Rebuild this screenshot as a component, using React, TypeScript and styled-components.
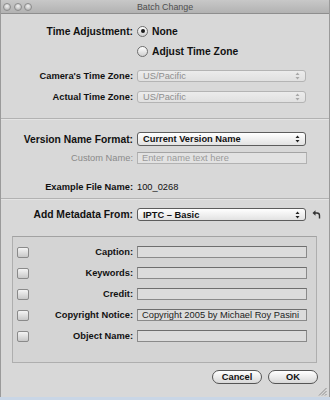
import styled, { createGlobalStyle } from "styled-components";

const Global = createGlobalStyle`
  html, body {
    margin: 0;
    padding: 0;
    background: #c9d6e6;
  }
  * {
    box-sizing: border-box;
  }
`;

const Win = {
  Main: styled.div`
    width: 330px;
    height: 397px;
    background: #d8d8d8;
    border-left: 1px solid #9a9a9a;
    border-right: 1px solid #9a9a9a;
    font-family: "Liberation Sans", Arial, sans-serif;
    color: #111;
    display: flex;
    flex-direction: column;
    position: relative;
  `,
  TitleBar: styled.div`
    height: 14px;
    background: linear-gradient(#c8c8c8, #b2b2b2);
    border-bottom: 1px solid #8e8e8e;
    display: flex;
    align-items: center;
    position: relative;
    padding-left: 2px;
    gap: 2.5px;
  `,
  Light: styled.span`
    width: 8px;
    height: 8px;
    border-radius: 50%;
    border: 1px solid #8c8c8c;
    background: radial-gradient(circle at 50% 35%, #f2f2f2, #bdbdbd 70%);
  `,
  Title: styled.div`
    position: absolute;
    left: 0;
    right: 0;
    top: 0;
    bottom: 0;
    display: flex;
    align-items: center;
    justify-content: center;
    font-size: 8.9px;
    color: #4e4e4e;
  `,
  Section: styled.div<{ $pt: number; $pb?: number }>`
    display: flex;
    flex-direction: column;
    padding-top: ${(p) => p.$pt}px;
    padding-bottom: ${(p) => p.$pb ?? 0}px;
  `,
  Divider: styled.div`
    height: 2px;
    border-top: 1px solid #b2b2b2;
    border-bottom: 1px solid #e4e4e4;
  `,
  Grip: styled.svg`
    position: absolute;
    right: 2px;
    bottom: 1px;
  `,
};

const Row = styled.div<{ $h: number; $mt?: number }>`
  display: flex;
  align-items: center;
  height: ${(p) => p.$h}px;
  margin-top: ${(p) => p.$mt ?? 0}px;
`;

const Label = styled.div<{ $big?: boolean; $dim?: boolean; $w?: number }>`
  width: ${(p) => p.$w ?? 132}px;
  flex-shrink: 0;
  text-align: right;
  font-size: ${(p) => (p.$big ? "10.3px" : "9.3px")};
  font-weight: ${(p) => (p.$dim ? 400 : 700)};
  color: ${(p) => (p.$dim ? "#8a8a8a" : "#111")};
  margin-right: 4px;
  white-space: nowrap;
`;

const Radio = styled.span<{ $on?: boolean }>`
  width: 11px;
  height: 11px;
  border-radius: 50%;
  border: 1px solid #6e6e6e;
  background: linear-gradient(#ffffff, #cfcfcf);
  display: inline-flex;
  align-items: center;
  justify-content: center;
  margin-right: 4px;
  flex-shrink: 0;

  &::after {
    content: "";
    width: 4px;
    height: 4px;
    border-radius: 50%;
    background: ${(p) => (p.$on ? "#1a1a1a" : "transparent")};
  }
`;

const RadioText = styled.span`
  font-size: 10.3px;
  font-weight: 700;
`;

const Popup = styled.div<{ $on?: boolean; $h: number }>`
  width: 169px;
  height: ${(p) => p.$h}px;
  border-radius: 3px;
  border: 1px solid ${(p) => (p.$on ? "#5c5c5c" : "#b4b4b4")};
  background: ${(p) =>
    p.$on ? "linear-gradient(#ffffff, #e2e2e2)" : "linear-gradient(#ececec, #e0e0e0)"};
  display: flex;
  align-items: center;
  justify-content: space-between;
  padding: 0 5px 0 5px;
  font-size: 9.3px;
  font-weight: ${(p) => (p.$on ? 700 : 400)};
  color: ${(p) => (p.$on ? "#111" : "#8e8e8e")};
`;

const Field = styled.div<{ $light?: boolean }>`
  width: 170px;
  height: 12px;
  border: 1px solid ${(p) => (p.$light ? "#b2b2b2" : "#8a8a8a")};
  border-top-color: ${(p) => (p.$light ? "#a4a4a4" : "#6e6e6e")};
  background: ${(p) => (p.$light ? "#e2e2e2" : "#dcdcdc")};
  font-size: 9.3px;
  display: flex;
  align-items: center;
  padding-left: 4px;
  color: ${(p) => (p.$light ? "#9a9a9a" : "#222")};
  white-space: nowrap;
  overflow: hidden;
`;

const Value = styled.span`
  font-size: 9.3px;
`;

const Box = styled.div`
  margin: 15px 12px 0 11px;
  height: 127px;
  border: 1px solid #aeaeae;
  border-top-color: #a2a2a2;
  background: #d4d4d4;
  display: flex;
  flex-direction: column;
  padding: 9px 0 0 4px;
  gap: 9px;
`;

const Check = styled.span`
  width: 12px;
  height: 11px;
  border-radius: 2px;
  border: 1px solid #8a8a8a;
  background: linear-gradient(#f4f4f4, #c8c8c8);
  flex-shrink: 0;
`;

const Buttons = styled.div`
  display: flex;
  justify-content: flex-end;
  gap: 6px;
  padding: 7px 11px 0 0;
`;

const Button = styled.div`
  width: 50px;
  height: 14px;
  border-radius: 7px;
  border: 1px solid #555;
  background: linear-gradient(#ffffff, #d8d8d8);
  font-size: 9.3px;
  font-weight: 700;
  display: flex;
  align-items: center;
  justify-content: center;
`;

const Revert = styled.svg`
  margin-left: 6px;
`;

const Arrows = ({ dim }: { dim?: boolean }) => (
  <svg width="5" height="8" viewBox="0 0 5 8">
    <path d="M2.5 0.5 L4.5 3 L0.5 3 Z M2.5 7.5 L4.5 5 L0.5 5 Z" fill={dim ? "#a8a8a8" : "#222"} />
  </svg>
);

const fields: { name: string; value?: string }[] = [
  { name: "Caption:" },
  { name: "Keywords:" },
  { name: "Credit:" },
  { name: "Copyright Notice:", value: "Copyright 2005 by Michael Roy Pasini" },
  { name: "Object Name:" },
];

export default function App() {
  return (
    <>
      <Global />
      <Win.Main>
        <Win.TitleBar>
          <Win.Light />
          <Win.Light />
          <Win.Light />
          <Win.Title>Batch Change</Win.Title>
        </Win.TitleBar>

        <Win.Section $pt={9} $pb={15}>
          <Row $h={16}>
            <Label $big>Time Adjustment:</Label>
            <Radio $on />
            <RadioText>None</RadioText>
          </Row>
          <Row $h={16} $mt={4}>
            <Label />
            <Radio />
            <RadioText>Adjust Time Zone</RadioText>
          </Row>
          <Row $h={12} $mt={11}>
            <Label>Camera's Time Zone:</Label>
            <Popup $h={12}>
              US/Pacific
              <Arrows dim />
            </Popup>
          </Row>
          <Row $h={12} $mt={9}>
            <Label>Actual Time Zone:</Label>
            <Popup $h={12}>
              US/Pacific
              <Arrows dim />
            </Popup>
          </Row>
        </Win.Section>

        <Win.Divider />

        <Win.Section $pt={12} $pb={5}>
          <Row $h={14}>
            <Label $big>Version Name Format:</Label>
            <Popup $on $h={14}>
              Current Version Name
              <Arrows />
            </Popup>
          </Row>
          <Row $h={12} $mt={6}>
            <Label $dim>Custom Name:</Label>
            <Field $light>Enter name text here</Field>
          </Row>
          <Row $h={13} $mt={16}>
            <Label>Example File Name:</Label>
            <Value>100_0268</Value>
          </Row>
        </Win.Section>

        <Win.Divider />

        <Win.Section $pt={8}>
          <Row $h={13}>
            <Label $big>Add Metadata From:</Label>
            <Popup $on $h={13}>
              IPTC – Basic
              <Arrows />
            </Popup>
            <Revert width="9" height="9" viewBox="0 0 9 9">
              <path d="M3 3 H5 A2.5 2.5 0 0 1 7.5 5.5 V8.5" fill="none" stroke="#333" strokeWidth="1.4" />
              <path d="M0.5 3 L3.5 0.3 L3.5 5.7 Z" fill="#333" />
            </Revert>
          </Row>
          <Box>
            {fields.map((f) => (
              <Row $h={12} key={f.name}>
                <Check />
                <Label $w={104}>{f.name}</Label>
                <Field>{f.value ?? ""}</Field>
              </Row>
            ))}
          </Box>
        </Win.Section>

        <Buttons>
          <Button>Cancel</Button>
          <Button>OK</Button>
        </Buttons>

        <Win.Grip width="10" height="10" viewBox="0 0 10 10">
          <path d="M9.5 2 L2 9.5 M9.5 5 L5 9.5 M9.5 8 L8 9.5" stroke="#8e8e8e" strokeWidth="1" />
        </Win.Grip>
      </Win.Main>
    </>
  );
}
